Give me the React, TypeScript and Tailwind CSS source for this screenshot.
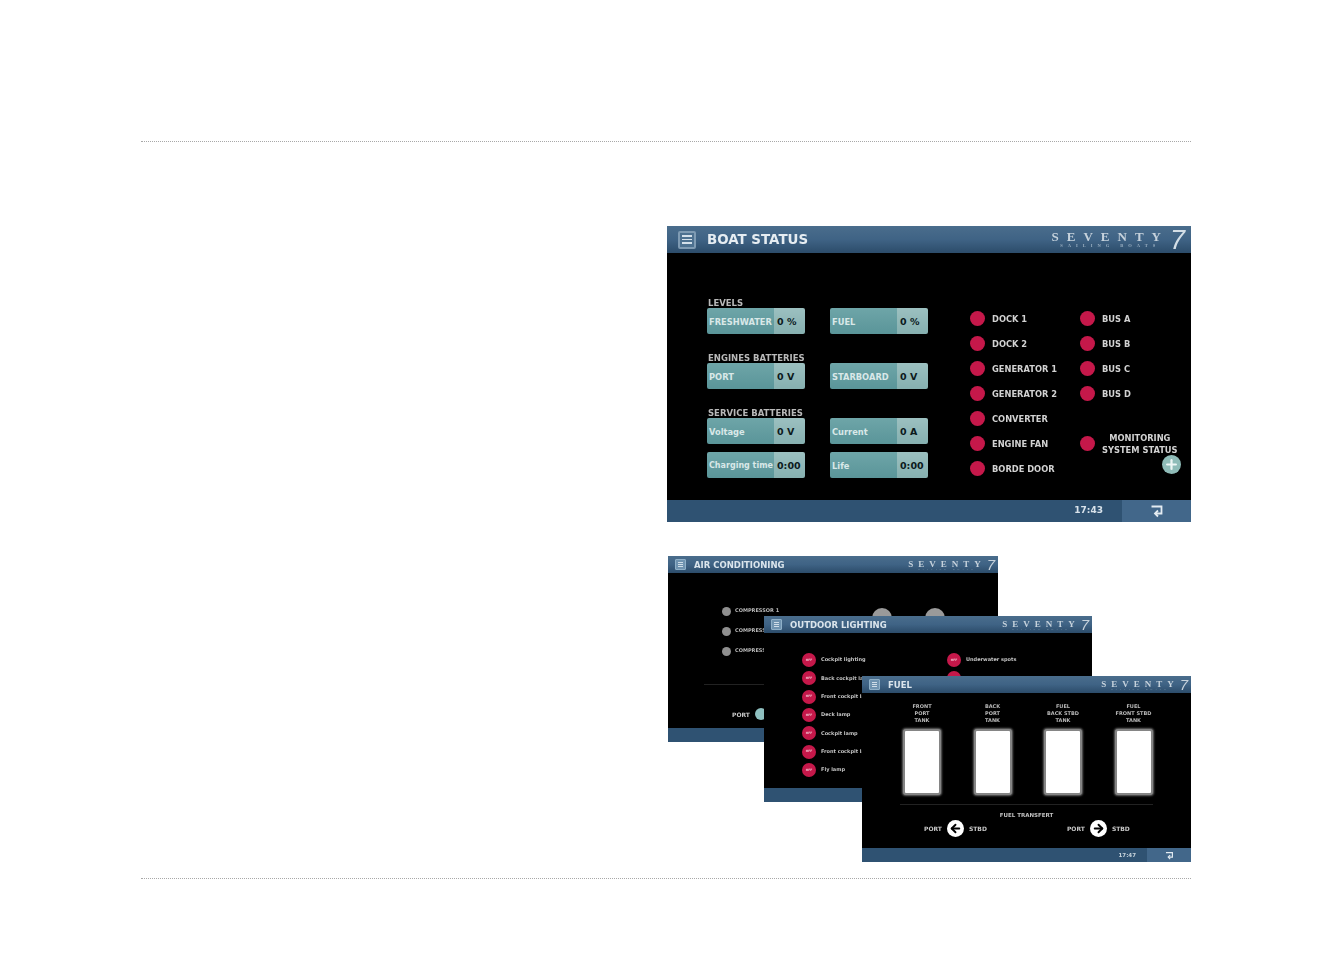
import React from "react";
import { Plus, ArrowLeft, ArrowRight } from "lucide-react";

const font = "font-['DejaVu_Sans',sans-serif]";
const headerBg = "bg-gradient-to-b from-[#4a6d8c] via-[#3f6385] to-[#2c4c6a]";

const MenuIcon = ({ big }: { big?: boolean }) => (
  <div
    className={
      big
        ? "w-[18px] h-[18px] rounded-[2px] border-2 border-[#7f9bb3] bg-[#4d7190] flex flex-col items-center justify-center gap-[2px]"
        : "w-[11px] h-[11px] rounded-[1px] border border-[#8fb0c8] bg-[#6f93b0] flex flex-col items-center justify-center gap-[1px]"
    }
  >
    {[0, 1, 2].map(i => (
      <div key={i} className={big ? "w-[10px] h-[1.5px] bg-[#d4e0ea]" : "w-[5px] h-[1px] bg-[#cfdde8]"} />
    ))}
  </div>
);

const Logo = ({ big }: { big?: boolean }) => (
  <div className="flex items-start font-['Liberation_Serif',serif] text-[#c6d2dc]">
    <div className="flex flex-col items-center">
      <span className={big ? "text-[13px] leading-[14px] tracking-[8px] font-bold" : "text-[9px] leading-[10px] tracking-[5px] font-bold"}>SEVENTY</span>
      <span className={big ? "text-[4.5px] leading-[4px] tracking-[5px] font-bold text-[#9db2c4]" : "text-[2.5px] leading-[2px] tracking-[3px] text-[#8ea5b8]"}>SAILING BOATS</span>
    </div>
    <span className={big ? "text-[27px] leading-[20px] ml-[1px] font-['Liberation_Sans',sans-serif] italic text-[#d3dee6]" : "text-[15px] leading-[12px] ml-[1px] font-['Liberation_Sans',sans-serif] italic"}>7</span>
  </div>
);

const ReturnIcon = ({ size }: { size: number }) => (
  <svg width={size} height={size} viewBox="0 0 14 14" fill="none" stroke="currentColor" strokeWidth="1.8" className="text-[#e4ecf2]">
    <path d="M1.5 2.5 H11.5 V9.5 H6" />
    <path d="M8 6.5 L5 9.5 L8 12.5" />
  </svg>
);

const SmallHeader = ({ title }: { title: string }) => (
  <div className={`h-[17px] shrink-0 ${headerBg} flex items-center pl-[7px] pr-[3px]`}>
    <MenuIcon />
    <span className={`${font} ml-[8px] pt-[1px] text-[8.5px] font-bold text-[#dbe5ec]`}>{title}</span>
    <div className="ml-auto">
      <Logo />
    </div>
  </div>
);

const Tile = ({ label, value, small }: { label: string; value: string; small?: boolean }) => (
  <div className={`${font} w-[98px] h-[26px] rounded-[2px] flex overflow-hidden font-bold`}>
    <div className="w-[67px] bg-gradient-to-b from-[#6ea5a8] to-[#5a9599] flex items-center pl-[2px] pt-[2px] text-[#d9e8e8] text-[8.3px] whitespace-nowrap">
      <span className={small ? "text-[8px]" : ""}>{label}</span>
    </div>
    <div className="flex-1 bg-gradient-to-b from-[#9cc0c0] to-[#86b0b0] flex items-center pl-[3px] pt-[2px] text-[#0c1a1c] text-[9.5px] whitespace-nowrap">
      {value}
    </div>
  </div>
);

const SectionLabel = ({ children, first }: { children: string; first?: boolean }) => (
  <div className={`${font} ${first ? "" : "mt-[18px]"} h-[11px] leading-[11px] pt-[1px] text-[8.5px] font-semibold text-[#b9b9b9] pl-[1px] col-span-2`}>
    {children}
  </div>
);

const Status = ({ label }: { label: string }) => (
  <div className="h-[25px] flex items-center gap-[7px]">
    <div className="w-[15px] h-[15px] rounded-full bg-[#c5184a] shrink-0" />
    <span className={`${font} pt-[1px] text-[8.3px] font-bold text-[#d2d2d2] whitespace-nowrap`}>{label}</span>
  </div>
);

const BoatStatus = () => (
  <div className="ml-auto w-[524px] h-[296px] flex flex-col bg-black blur-[0.5px]">
    <div className={`h-[27px] shrink-0 ${headerBg} flex items-center pl-[11px] pr-[6px]`}>
      <MenuIcon big />
      <span className={`${font} ml-[11px] pt-[1px] text-[13.4px] font-bold text-[#e6edf2]`}>BOAT STATUS</span>
      <div className="ml-auto">
        <Logo big />
      </div>
    </div>
    <div className="relative flex-1 flex pl-[40px]">
      <div className="pt-[44px] w-[221px] shrink-0">
        <SectionLabel first>LEVELS</SectionLabel>
        <div className="flex gap-[25px]">
          <Tile label="FRESHWATER" value="0 %" />
          <Tile label="FUEL" value="0 %" />
        </div>
        <SectionLabel>ENGINES BATTERIES</SectionLabel>
        <div className="flex gap-[25px]">
          <Tile label="PORT" value="0 V" />
          <Tile label="STARBOARD" value="0 V" />
        </div>
        <SectionLabel>SERVICE BATTERIES</SectionLabel>
        <div className="flex gap-[25px]">
          <Tile label="Voltage" value="0 V" />
          <Tile label="Current" value="0 A" />
        </div>
        <div className="flex gap-[25px] mt-[8px]">
          <Tile label="Charging time" value="0:00" small />
          <Tile label="Life" value="0:00" />
        </div>
      </div>
      <div className="ml-[42px] pt-[53px] w-[110px] shrink-0">
        {["DOCK 1", "DOCK 2", "GENERATOR 1", "GENERATOR 2", "CONVERTER", "ENGINE FAN", "BORDE DOOR"].map(s => (
          <Status key={s} label={s} />
        ))}
      </div>
      <div className="pt-[53px] flex-1">
        {["BUS A", "BUS B", "BUS C", "BUS D"].map(s => (
          <Status key={s} label={s} />
        ))}
        <div className="mt-[25px] h-[25px] flex items-center gap-[7px]">
          <div className="w-[15px] h-[15px] rounded-full bg-[#c5184a] shrink-0" />
          <span className={`${font} text-[8.3px] leading-[12px] font-bold text-[#d2d2d2] text-center whitespace-nowrap`}>
            MONITORING
            <br />
            SYSTEM STATUS
          </span>
        </div>
      </div>
      <div className="absolute left-[495px] top-[202px] w-[19px] h-[19px] rounded-full bg-[#8fbcb8] flex items-center justify-center">
        <Plus size={15} strokeWidth={3.5} className="text-[#eef6f5]" />
      </div>
    </div>
    <div className="h-[22px] shrink-0 bg-[#2f5272] flex items-center justify-end">
      <span className={`${font} mr-[19px] text-[9px] font-bold text-[#d8e2ea]`}>17:43</span>
      <div className="w-[69px] h-full bg-[#42678a] flex items-center justify-center">
        <ReturnIcon size={14} />
      </div>
    </div>
  </div>
);

const AirConditioning = () => (
  <div className="absolute left-[527px] top-0 w-[330px] h-[186px] flex flex-col bg-black blur-[0.5px]">
    <SmallHeader title="AIR CONDITIONING" />
    <div className={`${font} flex-1 relative`}>
      <div className="pl-[54px] pt-[33px] flex flex-col gap-[10px]">
        {["COMPRESSOR 1", "COMPRESSOR 2", "COMPRESSOR 3"].map(s => (
          <div key={s} className="h-[10px] flex items-center gap-[4px]">
            <div className="w-[9px] h-[9px] rounded-full bg-[#8f8f8f]" />
            <span className="text-[5px] font-bold text-[#b8b8b8] whitespace-nowrap">{s}</span>
          </div>
        ))}
      </div>
      <div className="absolute left-[204px] top-[35px] w-[20px] h-[20px] rounded-full bg-[#9a9a9a]" />
      <div className="absolute left-[257px] top-[35px] w-[20px] h-[20px] rounded-full bg-[#9a9a9a]" />
      <div className="mx-[36px] mt-[28px] border-t border-[#222]" />
      <div className="pl-[64px] mt-[23px] flex items-center gap-[5px]">
        <span className="text-[6px] font-bold text-[#c8c8c8]">PORT</span>
        <div className="w-[12px] h-[12px] rounded-full bg-[#8fc0c0]" />
      </div>
    </div>
    <div className="h-[14px] shrink-0 bg-[#2f5272]" />
  </div>
);

const OffDot = () => (
  <div className="w-[14px] h-[14px] rounded-full bg-[#c5184a] flex items-center justify-center shrink-0">
    <span className="text-[3px] text-[#f0c0d0] font-bold">OFF</span>
  </div>
);

const OutdoorLighting = () => (
  <div className="absolute left-[623px] top-[60px] w-[328px] h-[186px] flex flex-col bg-black blur-[0.5px]">
    <SmallHeader title="OUTDOOR LIGHTING" />
    <div className={`${font} flex-1 flex pl-[38px] pt-[20px]`}>
      <div className="w-[145px] flex flex-col gap-[4.35px]">
        {["Cockpit lighting", "Back cockpit lamp", "Front cockpit lamp", "Deck lamp", "Cockpit lamp", "Front cockpit lamp", "Fly lamp"].map(s => (
          <div key={s} className="flex items-center gap-[5px]">
            <OffDot />
            <span className="text-[5px] font-bold text-[#c4c4c4] whitespace-nowrap">{s}</span>
          </div>
        ))}
      </div>
      <div className="flex flex-col gap-[4.35px]">
        {["Underwater spots", "Courtesy lamp"].map(s => (
          <div key={s} className="flex items-center gap-[5px]">
            <OffDot />
            <span className="text-[5px] font-bold text-[#c4c4c4] whitespace-nowrap">{s}</span>
          </div>
        ))}
      </div>
    </div>
    <div className="h-[14px] shrink-0 bg-[#2f5272]" />
  </div>
);

const tanks = [
  ["FRONT", "PORT", "TANK"],
  ["BACK", "PORT", "TANK"],
  ["FUEL", "BACK STBD", "TANK"],
  ["FUEL", "FRONT STBD", "TANK"],
];

const Transfer = ({ dir }: { dir: "left" | "right" }) => (
  <div className="flex items-center gap-[5px] text-[6px] font-bold text-[#c8c8c8]">
    <span>PORT</span>
    <div className="w-[17px] h-[17px] rounded-full bg-white flex items-center justify-center">
      {dir === "left" ? (
        <ArrowLeft size={13} strokeWidth={3.5} className="text-black" />
      ) : (
        <ArrowRight size={13} strokeWidth={3.5} className="text-black" />
      )}
    </div>
    <span>STBD</span>
  </div>
);

const Fuel = () => (
  <div className="absolute left-[721px] top-[120px] w-[329px] h-[186px] flex flex-col bg-black blur-[0.5px]">
    <SmallHeader title="FUEL" />
    <div className={`${font} flex-1 flex flex-col`}>
      <div className="pl-[41px] pt-[10px] flex gap-[32.5px]">
        {tanks.map((lines, i) => (
          <div key={i} className="w-[38px] flex flex-col items-center">
            <div className="h-[23px] text-[5px] leading-[7px] font-bold text-[#b8b8b8] text-center whitespace-nowrap">
              {lines.map(l => (
                <div key={l}>{l}</div>
              ))}
            </div>
            <div className="mt-[3px] w-[38px] h-[66px] bg-white rounded-[3px] border-[2px] border-[#858585] shadow-[0_0_2px_1px_#666]" />
          </div>
        ))}
      </div>
      <div className="mx-[38px] mt-[9px] border-t border-[#222]" />
      <div className="mt-[6px] text-center text-[5.5px] font-bold text-[#c0c0c0]">FUEL TRANSFERT</div>
      <div className="mt-[1px] pl-[62px] flex gap-[80px]">
        <Transfer dir="left" />
        <Transfer dir="right" />
      </div>
    </div>
    <div className="h-[14px] shrink-0 bg-[#2f5272] flex items-center justify-end">
      <span className={`${font} mr-[11px] text-[5.5px] font-bold text-[#c8d4dc]`}>17:47</span>
      <div className="w-[44px] h-full bg-[#42678a] flex items-center justify-center">
        <ReturnIcon size={9} />
      </div>
    </div>
  </div>
);

export default function App() {
  return (
    <div className="min-h-[964px] bg-white pt-[141px] overflow-hidden">
      <div className="w-[1050px] ml-[141px]">
        <div className="border-t border-dotted border-[#a8a8a8]" />
        <div className="mt-[84px]">
          <BoatStatus />
        </div>
        <div className="relative h-[306px] mt-[34px]">
          <AirConditioning />
          <OutdoorLighting />
          <Fuel />
        </div>
        <div className="mt-[16px] border-t border-dotted border-[#a8a8a8]" />
      </div>
    </div>
  );
}
